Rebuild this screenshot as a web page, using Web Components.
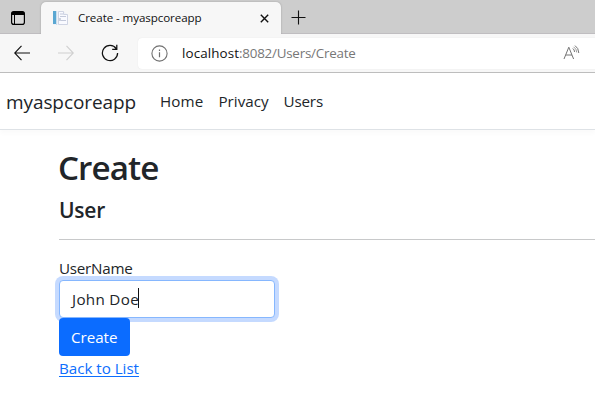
<!DOCTYPE html>
<html lang="en"><head><meta charset="utf-8"><title>Create - myaspcoreapp</title>
<style>
html,body{margin:0;height:100%;overflow:hidden;background:#fff}
body{font-family:"Open Sans","Noto Sans",sans-serif;font-weight:400;color:#212529}
</style></head><body>
<app-window></app-window>
<script>
const define=(name,html,after)=>customElements.define(name,class extends HTMLElement{
  constructor(){super();this.attachShadow({mode:'open'}).innerHTML=html}
  connectedCallback(){if(after)after(this)}
});

/* A run of text tracked to a given advance width. */
define('fit-text','<style>:host{display:inline-block;white-space:pre;flex:none}</style><span><slot></slot></span>',el=>{
  const w=+el.getAttribute('w'),s=el.shadowRoot.querySelector('span');
  const n=el.textContent.length;
  s.style.letterSpacing=((w-s.getBoundingClientRect().width)/n)+'px';
});

define('tab-strip',`<style>
:host{display:flex;height:34px;box-sizing:border-box;background:#cdcdcd;border-bottom:1px solid #bfbdc0}
.menu{width:41px;padding:11px 0 0 11px;box-sizing:border-box;flex:none}
svg{display:block;flex:none}
.tab{width:240px;height:32px;margin-top:2px;box-sizing:border-box;background:#f7f7f7;border-radius:5px 5px 0 0;display:flex;align-items:center;padding:0 12px 0 11px;box-shadow:0 0 2px #999;clip-path:inset(-2px -2px 0 -2px)}
.title{font-size:11.6px;line-height:16px;color:#111;margin-left:9px;flex:1}
.new{padding:10px 0 0 10px}
</style>
<div class="menu"><svg width="14" height="14" viewBox="0 0 14 14"><rect x=".6" y=".6" width="12.8" height="12.8" rx="2.2" fill="#d8d8d8" stroke="#000" stroke-width="1.2"/><path d="M.6 4V2.6Q.6.6 2.6.6h8.8q2 0 2 2V4z"/><path d="M3.5 4v9.5" stroke="#000"/></svg></div>
<div class="tab">
<svg width="17" height="16" viewBox="0 0 17 16"><path d="M1 1h10l5 4v10H1z" fill="#edf0f7"/><path d="M1 1h3v13H1z" fill="#5aa7d2"/><path d="M4 1h1v14H4z" fill="#c9dfed"/><path d="M6.5 1.5h5v3h4v10h-9z" fill="#f9faff" stroke="#cfd4e3"/><path d="M8 4h3M8 6.500h6M8 10.500h6" stroke="#c3c9da"/><path d="M6 8h3v3H6z" fill="#cbd2df"/></svg>
<span class="title"><fit-text w="123.500">Create - myaspcoreapp</fit-text></span>
<svg width="9" height="9" viewBox="0 0 9 9" style="margin:1px 0 0"><path d="M.8.8l7.400 7.400M8.200.8L.8 8.200" stroke="#111" stroke-width="1.400"/></svg>
</div><div class="new"><svg width="15" height="15" viewBox="0 0 15 15"><path d="M7.500.5v14M.5 7.500h14" stroke="#111" stroke-width="1.100"/></svg></div>`);

define('address-bar',`<style>
:host{display:flex;height:39px;box-sizing:border-box;background:#f7f7f7;border-bottom:1px solid #bdbdbd;align-items:flex-start}
svg{display:block;flex:none}
.tools{display:flex;width:138px;height:38px;flex:none;box-sizing:border-box;padding:0 0 0 14px;align-items:center;gap:28px}
.box{flex:1;height:31px;margin-top:4px;background:#fff;border-radius:4px 0 0 4px;display:flex;align-items:center;padding:0 15px 0 13px;box-shadow:0 0 1px #ddd}
.url{flex:1;font-size:13.400px;line-height:20px;color:#777;margin:-2px 0 0 14px;white-space:nowrap}
b{font-weight:inherit;color:#111}
</style>
<div class="tools">
<svg width="16" height="16" viewBox="0 0 16 16"><path d="M16 8H.8M7.500.8L.7 8l6.800 7.200" fill="none" stroke="#111" stroke-width="1.150"/></svg>
<svg width="16" height="16" viewBox="0 0 16 16"><path d="M0 8h15.200M8.500.8L15.300 8l-6.800 7.200" fill="none" stroke="#d0d0d0" stroke-width="1.150"/></svg>
<svg width="18" height="18" viewBox="0 0 18 18" style="margin-left:-1px"><path d="M15.300 4.800A7.600 7.600 0 1 0 16.600 9M15.800.8v4.500h-4.600" fill="none" stroke="#111" stroke-width="1.250"/></svg>
</div>
<div class="box"><svg width="17" height="17" viewBox="0 0 17 17"><circle cx="8.500" cy="8.500" r="7.600" fill="none" stroke="#707070" stroke-width="1.100"/><path d="M8.500 7.300v5M8.500 4.500v1.400" stroke="#707070" stroke-width="1.200"/></svg>
<span class="url"><b><fit-text w="57">localhost</fit-text></b><fit-text w="116.500">:8082/Users/Create</fit-text></span>
<svg width="17" height="16" viewBox="0 0 17 16" style="margin:-2px 0 0"><path d="M1 14L5.800 2.200 10.600 14M2.700 10h6.300M9.800 3.500q1.800 1.200 1.700 3.500M12 .6q3.600 2.300 3.800 7.400" fill="none" stroke="#747474" stroke-width="1"/><path d="M10.500 1.800q3.200 2 3.200 5.600" fill="none" stroke="#747474" stroke-width=".7"/></svg></div>`);

define('site-nav',`<style>
:host{display:flex;height:57px;box-sizing:border-box;border-bottom:1px solid #dee2e6;box-shadow:0 4px 4px rgba(0,0,0,.018);padding-left:6px;align-items:center;font-size:15.200px;background:#fff;line-height:24px}
.brand{font-size:19px;line-height:30px;margin:2px 24px 0 0}
nav{display:flex;gap:15px;margin-top:-1px}
</style><span class="brand"><fit-text w="130">myaspcoreapp</fit-text></span>
<nav><fit-text w="43.500">Home</fit-text><fit-text w="50">Privacy</fit-text><fit-text w="39.500">Users</fit-text></nav>`);

define('text-field',`<style>
:host{display:block;width:216px;height:38px;box-sizing:border-box;border:1px solid #86b7fe;border-radius:4px;box-shadow:0 0 0 4px #c5daff;background:#fff;padding:6px 0 0 12px;line-height:24px}
div{display:flex}i{width:1px;height:20px;background:#111;margin:1px 0 0 -1px}
</style><div><slot></slot><i></i></div>`);

define('primary-button',`<style>
:host{display:block;position:relative;width:71px;height:38px;box-sizing:border-box;background:#0b6cff;border-radius:4px;color:#fff;padding:7px 0 0 12px;line-height:24px}
</style><slot></slot>`);

define('create-form',`<style>
:host{display:block;padding:17px 0 0 59px;font-size:15.200px;line-height:24px}
h1{font-weight:600;font-size:33.200px;line-height:41px;margin:0 0 0 -1px}
h4{font-weight:600;font-size:21px;line-height:26px;margin:9px 0 0;height:42px}
hr{border:0;height:1px;background:#c8c9ca;margin:0 0 16px}
label{display:block;height:24px}
a{display:block;width:80px;color:#0d6efd}
a fit-text{text-decoration:underline;text-underline-offset:2px;text-decoration-thickness:1px}
</style>
<h1><fit-text w="100.500">Create</fit-text></h1>
<h4><fit-text w="46">User</fit-text></h4><hr>
<label><fit-text w="73.500">UserName</fit-text></label>
<text-field><fit-text w="67">John Doe</fit-text></text-field>
<primary-button><fit-text w="46.500">Create</fit-text></primary-button>
<a><fit-text w="80">Back to List</fit-text></a>`);

define('app-window',`<style>:host{display:block}</style><tab-strip></tab-strip><address-bar></address-bar><site-nav></site-nav><create-form></create-form>`);
</script></body></html>
